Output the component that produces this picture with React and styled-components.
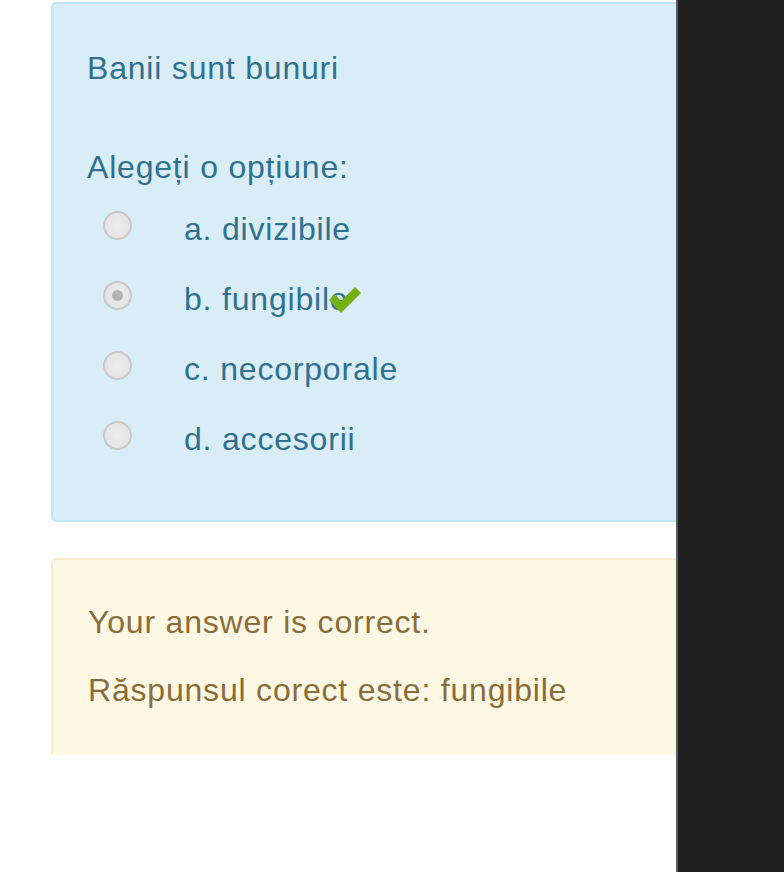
import React from 'react';
import styled, { createGlobalStyle } from 'styled-components';

const GlobalStyle = createGlobalStyle`
  html, body {
    margin: 0;
    padding: 0;
    background: #ffffff;
  }
  body {
    font-family: "Liberation Sans", Arial, sans-serif;
  }
`;

const Page = styled.div`
  display: flex;
  width: 784px;
  height: 872px;
  overflow: hidden;
`;

const Main = styled.div`
  flex: 1;
  display: flex;
  flex-direction: column;
  gap: 36px;
  padding: 2px 0 0 51px;
`;

const Sidebar = styled.div`
  width: 106px;
  background: #1f1f1f;
  border-left: 2px solid #5c5c5c;
`;

const Box = styled.div`
  border: 2px solid ${p => p.$border};
  border-right: none;
  border-radius: 5px 0 0 5px;
  background: ${p => p.$bg};
  color: ${p => p.$color};
  font-size: 32px;
  line-height: 40px;
  letter-spacing: 0.8px;
`;

const InfoBox = styled(Box)`
  height: 472px;
  padding: 44px 0 0 34px;
`;

const FeedbackBox = styled(Box)`
  height: 153px;
  padding: 42px 0 0 35px;
  border-bottom: none;
  border-radius: 5px 0 0 0;
`;

const QText = styled.div`
  margin: 0 0 59px 0;
`;

const Prompt = styled.div`
  margin-bottom: 7px;
`;

const Options = styled.div`
  display: flex;
  flex-direction: column;
`;

const Option = styled.div`
  display: flex;
  align-items: center;
  height: 70px;
`;

const Radio = styled.span`
  box-sizing: border-box;
  width: 29px;
  height: 29px;
  margin: -8px 52px 0 16px;
  border-radius: 50%;
  border: 2px solid #c9c9c9;
  background: radial-gradient(circle, #ececec 0%, #e2e2e2 100%);
  display: flex;
  align-items: center;
  justify-content: center;
  &::after {
    content: '';
    width: 11px;
    height: 11px;
    border-radius: 50%;
    background: ${p => (p.$checked ? '#b4b4b4' : 'transparent')};
  }
`;

const Label = styled.span`
  display: inline-flex;
  align-items: center;
`;

const Check = styled.svg`
  width: 36px;
  height: 30px;
  margin: 2px 0 0 -21px;
`;

const Line = styled.div`
  margin-bottom: 28px;
`;

const options = [
  { id: 'a', text: 'divizibile' },
  { id: 'b', text: 'fungibile', checked: true },
  { id: 'c', text: 'necorporale' },
  { id: 'd', text: 'accesorii' },
];

const App = () => (
  <>
    <GlobalStyle />
    <Page>
      <Main>
        <InfoBox $bg="#d9edf7" $border="#bce8f1" $color="#31708f">
          <QText>Banii sunt bunuri</QText>
          <Prompt>Alegeți o opțiune:</Prompt>
          <Options>
            {options.map(o => (
              <Option key={o.id}>
                <Radio $checked={o.checked} />
                <Label>
                  {o.id}. {o.text}
                  {o.checked && (
                    <Check viewBox="0 0 36 30">
                      <path d="M2 15 L8 9 L14 16 L28 2 L34 8 L14 28 Z" fill="#73b013" />
                    </Check>
                  )}
                </Label>
              </Option>
            ))}
          </Options>
        </InfoBox>
        <FeedbackBox $bg="#fcf8e3" $border="#faebcc" $color="#8a6d3b">
          <Line>Your answer is correct.</Line>
          <Line>Răspunsul corect este: fungibile</Line>
        </FeedbackBox>
      </Main>
      <Sidebar />
    </Page>
  </>
);

export default App;
